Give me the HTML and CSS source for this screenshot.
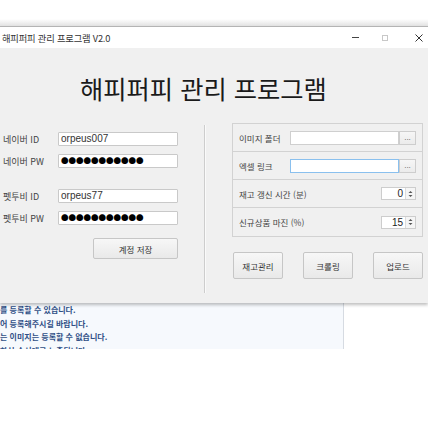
FILE: index.html
```html
<!DOCTYPE html>
<html lang="ko">
<head>
<meta charset="utf-8">
<title>해피퍼피 관리 프로그램 V2.0</title>
<link rel="stylesheet" href="styles.css">
</head>
<body>
<div class="top-gap"></div>
<div class="window">
  <div class="titlebar">
    <span class="title-text">해피퍼피 관리 프로그램 V2.0</span>
    <div class="controls">
      <span class="ctl ctl-min"></span>
      <span class="ctl ctl-max"></span>
      <svg class="ctl-close" width="8" height="8" viewBox="0 0 8 8"><path d="M0.5 0.5L7.5 7.5M7.5 0.5L0.5 7.5" stroke="#333" stroke-width="1"/></svg>
    </div>
  </div>
  <div class="content">
    <h1 class="heading">해피퍼피 관리 프로그램</h1>
    <div class="main">
      <div class="left">
        <div class="frow">
          <span class="flabel">네이버 ID</span>
          <span class="tbox">orpeus007</span>
        </div>
        <div class="frow">
          <span class="flabel">네이버 PW</span>
          <span class="tbox dots">●●●●●●●●●●●</span>
        </div>
        <div class="frow group2">
          <span class="flabel">펫투비 ID</span>
          <span class="tbox">orpeus77</span>
        </div>
        <div class="frow">
          <span class="flabel">펫투비 PW</span>
          <span class="tbox dots">●●●●●●●●●●●</span>
        </div>
        <button class="btn btn-save">계정 저장</button>
      </div>
      <div class="sep"></div>
      <div class="right">
        <div class="group">
          <div class="grow">
            <span class="glabel">이미지 폴더</span>
            <span class="pbox"></span>
            <span class="browse">...</span>
          </div>
          <div class="grow">
            <span class="glabel">엑셀 링크</span>
            <span class="pbox focus"></span>
            <span class="browse">...</span>
          </div>
          <div class="grow">
            <span class="glabel wide">재고 갱신 시간 (분)</span>
            <span class="spin"><span class="spin-val">0</span><span class="spin-arrows"><svg width="5" height="8" viewBox="0 0 5 8"><path d="M0.5 3L2.5 1L4.5 3Z M0.5 5L2.5 7L4.5 5Z" fill="#555"/></svg></span></span>
          </div>
          <div class="grow">
            <span class="glabel wide">신규상품 마진 (%)</span>
            <span class="spin"><span class="spin-val">15</span><span class="spin-arrows"><svg width="5" height="8" viewBox="0 0 5 8"><path d="M0.5 3L2.5 1L4.5 3Z M0.5 5L2.5 7L4.5 5Z" fill="#555"/></svg></span></span>
          </div>
        </div>
        <div class="actions">
          <button class="btn btn-act">재고관리</button>
          <button class="btn btn-act">크롤링</button>
          <button class="btn btn-act">업로드</button>
        </div>
      </div>
    </div>
  </div>
</div>
<div class="log">
  <p>를 등록할 수 있습니다.</p>
  <p>어 등록해주시길 바랍니다.</p>
  <p>는 이미지는 등록할 수 없습니다.</p>
  <p>하신 순서대로 노출됩니다</p>
</div>
</body>
</html>
```
FILE: styles.css
```css
html, body {
  margin: 0;
  padding: 0;
  background: #ffffff;
}
body {
  width: 428px;
  height: 427px;
  overflow: hidden;
  font-family: "Noto Sans CJK KR", "Noto Sans", sans-serif;
  color: #222;
}
.top-gap {
  height: 26px;
  background: linear-gradient(#ffffff 0, #ffffff 19px, #e6e6e6 25px);
}
.window {
  border-top: 1px solid #b4b4b4;
  box-shadow: 0 2px 3px rgba(0, 0, 0, 0.25);
  position: relative;
  z-index: 1;
}
.titlebar {
  height: 21px;
  background: #ffffff;
  display: flex;
  align-items: center;
  justify-content: space-between;
}
.title-text {
  font-size: 9.3px;
  line-height: 12px;
  color: #333;
  padding-left: 2px;
  letter-spacing: -0.2px;
}
.controls {
  display: flex;
  align-items: center;
  padding-right: 5px;
}
.ctl-min {
  width: 7px;
  height: 1px;
  background: #444;
  margin-right: 23px;
}
.ctl-max {
  width: 6px;
  height: 6px;
  border: 1px solid #c8c8c8;
  box-sizing: border-box;
  margin-right: 27px;
}
.ctl-close {
  display: block;
}
.content {
  background: #f0f0f0;
  height: 255px;
  overflow: hidden;
}
.heading {
  margin: 24px 0 0 80px;
  font-size: 25.3px;
  line-height: 32px;
  font-weight: 400;
  color: #1a1a1a;
  letter-spacing: 0;
}
.main {
  display: flex;
  margin-top: 19px;
}
.left {
  width: 204px;
  padding-top: 9px;
  display: flex;
  flex-direction: column;
  gap: 8px;
}
.frow {
  display: flex;
  align-items: center;
  height: 14px;
}
.group2 {
  margin-top: 13px;
}
.flabel {
  width: 55px;
  padding-left: 3px;
  font-size: 9px;
  color: #444;
  white-space: nowrap;
}
.tbox {
  width: 120px;
  height: 14px;
  box-sizing: border-box;
  background: #fff;
  border: 1px solid #c9c9c9;
  border-radius: 1px;
  font-family: "Liberation Sans", "Noto Sans", sans-serif;
  font-size: 10px;
  line-height: 12px;
  padding-left: 2px;
  color: #333;
}
.dots {
  font-family: "Noto Sans CJK KR", sans-serif;
  font-size: 7.5px;
  line-height: 12px;
  letter-spacing: 0;
  color: #000;
}
.btn {
  font-family: "Noto Sans CJK KR", sans-serif;
  font-size: 8.5px;
  color: #333;
  background: linear-gradient(#f7f7f7, #e9e9e9);
  border: 1px solid #c6c6c6;
  border-radius: 2px;
  padding: 0;
  margin: 0;
}
.btn-save {
  width: 85px;
  height: 21px;
  margin: 5px 0 0 93px;
}
.sep {
  width: 0;
  height: 168px;
  margin-top: 2px;
  border-left: 1px solid #cdcdcd;
  border-right: 1px solid #fafafa;
}
.right {
  margin-left: 26px;
  width: 191px;
}
.group {
  border: 1px solid #d2d2d2;
}
.grow {
  height: 27px;
  display: flex;
  align-items: center;
  padding-left: 6px;
  border-bottom: 1px solid #d2d2d2;
}
.grow:last-child {
  border-bottom: none;
  height: 28px;
}
.glabel {
  width: 51px;
  font-size: 8.5px;
  color: #444;
  white-space: nowrap;
}
.glabel.wide {
  flex: 1;
}
.pbox {
  width: 109px;
  height: 14px;
  box-sizing: border-box;
  background: #fff;
  border: 1px solid #cfcfcf;
}
.pbox.focus {
  border-color: #8ac0ee;
}
.browse {
  width: 17px;
  height: 14px;
  box-sizing: border-box;
  border: 1px solid #cdcdcd;
  background: linear-gradient(#f6f6f6, #ebebeb);
  font-family: "Liberation Sans", sans-serif;
  font-size: 8px;
  line-height: 12px;
  text-align: center;
  color: #555;
}
.spin {
  width: 35px;
  height: 13px;
  box-sizing: border-box;
  border: 1px solid #cdcdcd;
  background: #fff;
  display: flex;
  margin-right: 6px;
}
.spin-val {
  flex: 1;
  text-align: right;
  font-family: "Liberation Sans", sans-serif;
  font-size: 10px;
  line-height: 11px;
  padding-right: 2px;
  color: #222;
}
.spin-arrows {
  width: 9px;
  border-left: 1px solid #dcdcdc;
  background: #f5f5f5;
  display: flex;
  align-items: center;
  justify-content: center;
}
.spin-arrows svg {
  display: block;
}
.actions {
  display: flex;
  gap: 20px;
  margin-top: 15px;
  padding-left: 1px;
}
.btn-act {
  width: 50px;
  height: 27px;
}
.log {
  width: 343px;
  height: 46px;
  overflow: hidden;
  background: #f6f9fd;
  border-right: 1px solid #d6dbe2;
}
.log p {
  margin: 0;
  font-size: 8px;
  line-height: 13.5px;
  font-weight: 700;
  color: #2f4f86;
  white-space: nowrap;
}
```
